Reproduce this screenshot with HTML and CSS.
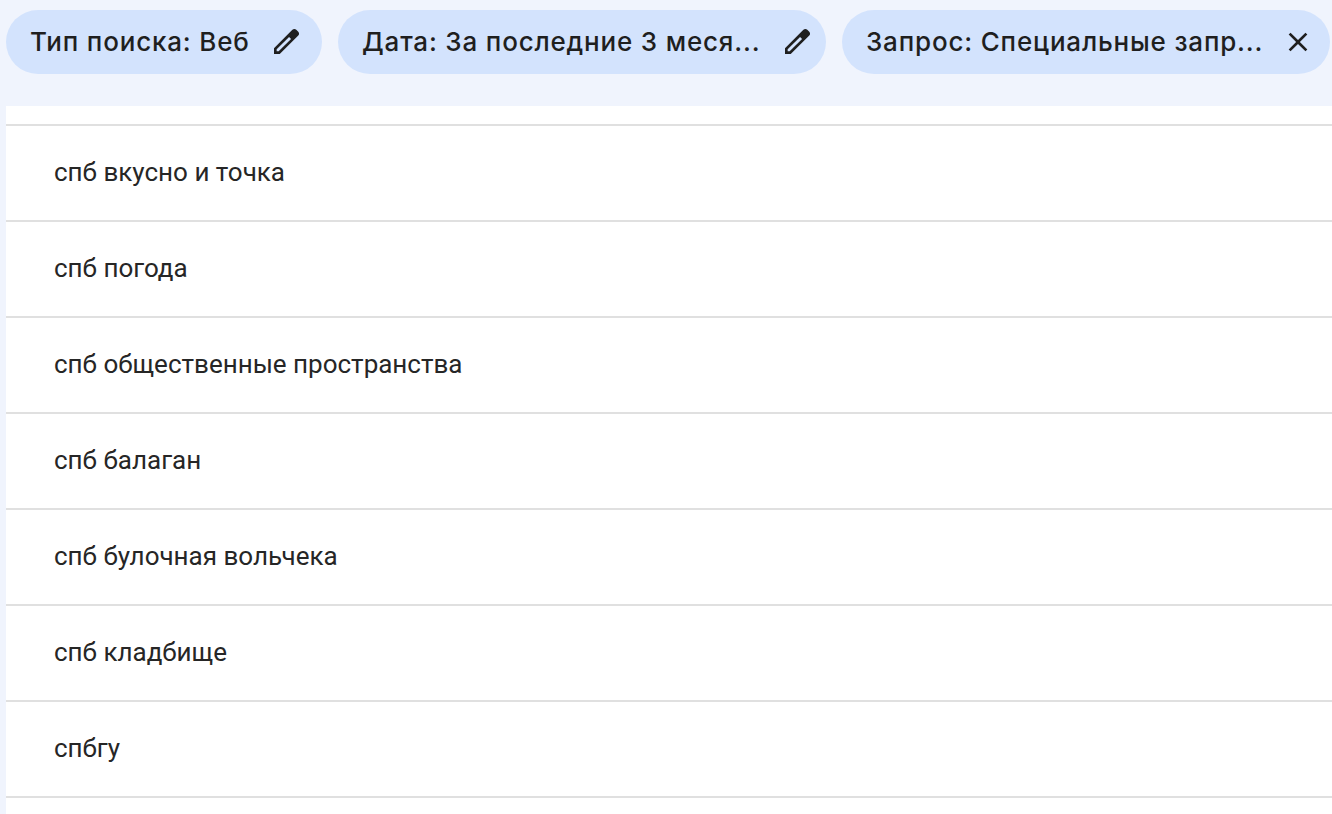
FILE: index.html
```html
<!DOCTYPE html>
<html lang="ru">
<head>
  <meta charset="UTF-8">
  <title>Поисковые запросы</title>
  <link rel="stylesheet" href="styles.css">
</head>
<body>
  <div class="filters">
    <div class="chip chip-type">
      <span class="chip-label">Тип поиска: Веб</span>
      <svg class="chip-icon" viewBox="0 0 24 24"><path fill-rule="evenodd" d="M3 21v-4.300L15.300 4.300l1.500-1.500c.8-.8 2.100-.8 2.900 0l1.500 1.500c.8.8.8 2.100 0 2.900l-1.500 1.500L7.300 21H3zM5 19h1.500L15.800 9.700l-1.500-1.500L5 17.500V19z"/></svg>
    </div>
    <div class="chip chip-date">
      <span class="chip-label">Дата: За последние 3 меся...</span>
      <svg class="chip-icon" viewBox="0 0 24 24"><path fill-rule="evenodd" d="M3 21v-4.300L15.300 4.300l1.500-1.500c.8-.8 2.100-.8 2.900 0l1.500 1.500c.8.8.8 2.100 0 2.900l-1.500 1.500L7.300 21H3zM5 19h1.500L15.800 9.700l-1.500-1.500L5 17.500V19z"/></svg>
    </div>
    <div class="chip chip-query">
      <span class="chip-label">Запрос: Специальные запр...</span>
      <svg class="chip-icon" viewBox="0 0 24 24"><path d="M19 6.410 17.590 5 12 10.590 6.410 5 5 6.410 10.590 12 5 17.590 6.410 19 12 13.410 17.590 19 19 17.590 13.410 12z"/></svg>
    </div>
  </div>

  <div class="results">
    <div class="row row-top"></div>
    <div class="row">спб вкусно и точка</div>
    <div class="row">спб погода</div>
    <div class="row">спб общественные пространства</div>
    <div class="row">спб балаган</div>
    <div class="row">спб булочная вольчека</div>
    <div class="row">спб кладбище</div>
    <div class="row">спбгу</div>
  </div>
</body>
</html>
```

FILE: styles.css
```css
body {
  margin: 0;
  height: 814px;
  overflow: hidden;
  background-color: #f0f4fd;
  color: #1f1f1f;
  font-family: 'Roboto', 'Liberation Sans', sans-serif;
}
.filters {
  display: flex;
  gap: 16px;
  height: 106px;
  padding: 10px 0 0 6px;
  box-sizing: border-box;
}
.chip {
  display: flex;
  align-items: center;
  justify-content: space-between;
  height: 64px;
  padding: 0 16px 0 24px;
  box-sizing: border-box;
  border-radius: 32px;
  background-color: #d3e3fd;
  font-family: 'Inter', 'Roboto', sans-serif;
  font-size: 26px;
  white-space: nowrap;
}
.chip-label {
  font-weight: 500;
  letter-spacing: 0.82px;
  margin-top: -2px;
}
.chip-type {
  width: 316px;
  padding-right: 20px;
}
.chip-date {
  width: 488px;
  padding-right: 13px;
}
.chip-query {
  width: 488px;
}
.chip-icon {
  width: 32px;
  height: 32px;
  fill: #1f1f1f;
}
.results {
  margin-left: 6px;
  background-color: #fff;
  height: 708px;
}
.row {
  height: 96px;
  box-sizing: border-box;
  padding: 0 48px 2px;
  display: flex;
  align-items: center;
  border-bottom: 2px solid #e0e0e0;
  font-size: 26px;
  color: #262626;
}
.row-top {
  height: 20px;
  padding: 0;
}
```
